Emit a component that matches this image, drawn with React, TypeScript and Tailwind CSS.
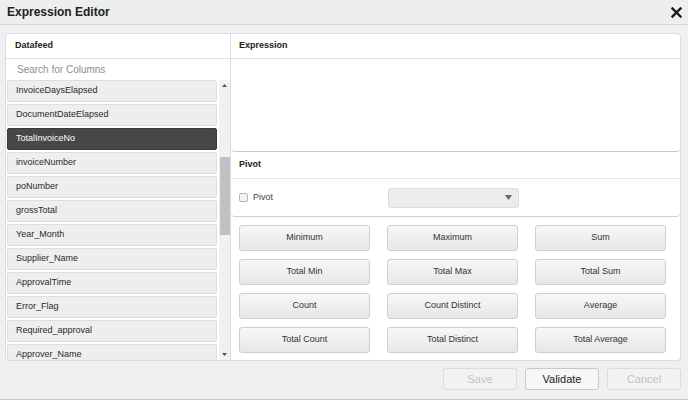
import React from 'react';

const columns = [
  'InvoiceDaysElapsed',
  'DocumentDateElapsed',
  'TotalInvoiceNo',
  'invoiceNumber',
  'poNumber',
  'grossTotal',
  'Year_Month',
  'Supplier_Name',
  'ApprovalTime',
  'Error_Flag',
  'Required_approval',
  'Approver_Name',
];

const aggregates = [
  'Minimum',
  'Maximum',
  'Sum',
  'Total Min',
  'Total Max',
  'Total Sum',
  'Count',
  'Count Distinct',
  'Average',
  'Total Count',
  'Total Distinct',
  'Total Average',
];

export default function App() {
  const selected = 'TotalInvoiceNo';

  return (
    <div
      className="w-[688px] h-[400px] bg-[#f0f0f0] flex flex-col overflow-hidden text-[#333]"
      style={{ fontFamily: '"Liberation Sans", Arial, sans-serif' }}
    >
      {/* header */}
      <div className="h-[25px] shrink-0 flex items-center justify-between pl-[7px] pr-[6px] bg-[#eeeeee] border-b border-[#d6d6d6]">
        <div className="text-[12px] font-bold text-[#222]">Expression Editor</div>
        <svg width="11" height="11" viewBox="0 0 11 11">
          <path d="M1.5 1.5 L9.5 9.5 M9.5 1.5 L1.5 9.5" stroke="#1a1a1a" strokeWidth="2.4" strokeLinecap="square" />
        </svg>
      </div>

      {/* body */}
      <div className="flex pl-[5px] pr-[7px] pt-[8px] h-[336px] shrink-0">
        {/* left column */}
        <div className="w-[226px] h-[328px] flex flex-col bg-white border border-[#dcdcdc] rounded-l-[4px] overflow-hidden">
          <div className="h-[25px] shrink-0 flex items-center px-[9px] text-[9px] font-bold text-[#222] border-b border-[#e2e2e2]">
            Datafeed
          </div>
          <div className="h-[21px] shrink-0 flex items-center px-[11px]">
            <span className="text-[10px] text-[#8e8e8e]">Search for Columns</span>
          </div>
          <div className="flex-1 flex min-h-0">
            <div className="flex-1 flex flex-col gap-[2px] pl-[1px] pr-[2px] overflow-hidden">
              {columns.map((c) => (
                <div
                  key={c}
                  className={
                    c === selected
                      ? 'h-[22px] shrink-0 flex items-center px-[8px] rounded-[2px] bg-[#474747] border border-[#3a3a3a] text-[9px] text-white'
                      : 'h-[22px] shrink-0 flex items-center px-[8px] rounded-[2px] bg-[#eeeeee] border border-[#dedede] text-[9px] text-[#2a2a2a]'
                  }
                >
                  {c}
                </div>
              ))}
            </div>
            {/* scrollbar */}
            <div className="w-[11px] shrink-0 bg-[#f1f1f1] flex flex-col items-center">
              <div className="h-[11px] flex items-center justify-center">
                <svg width="5" height="3" viewBox="0 0 5 3">
                  <path d="M0 3 L2.5 0 L5 3 Z" fill="#505050" />
                </svg>
              </div>
              <div className="h-[66px]" />
              <div className="w-[10px] h-[78px] bg-[#c1c1c1]" />
              <div className="flex-1" />
              <div className="h-[11px] flex items-center justify-center">
                <svg width="5" height="3" viewBox="0 0 5 3">
                  <path d="M0 0 L5 0 L2.5 3 Z" fill="#505050" />
                </svg>
              </div>
            </div>
          </div>
        </div>

        {/* right column */}
        <div className="flex-1 h-[328px] flex flex-col bg-white border border-l-0 border-[#dcdcdc] rounded-r-[4px]">
          <div className="flex flex-col border-b border-[#c8c8c8] rounded-b-[4px]">
            <div className="h-[25px] flex items-center px-[8px] text-[9px] font-bold text-[#222] border-b border-[#e2e2e2]">
              Expression
            </div>
            <div className="h-[92px]" />
          </div>
          <div className="flex flex-col border-b border-[#d0d0d0] rounded-b-[4px]">
            <div className="h-[27px] flex items-center px-[8px] text-[9px] font-bold text-[#222] border-b border-[#e8e8e8]">
              Pivot
            </div>
            <div className="h-[37px] flex items-center px-[8px]">
              <div className="w-[149px] flex items-center gap-[5px]">
                <div className="w-[9px] h-[9px] rounded-[2px] border border-[#b5b5b5] bg-[#f4f4f4]" />
                <span className="text-[9px] text-[#444]">Pivot</span>
              </div>
              <div className="w-[131px] h-[20px] rounded-[3px] border border-[#dcdcdc] bg-[#ececec] flex items-center justify-end pr-[6px]">
                <svg width="7" height="5" viewBox="0 0 7 5">
                  <path d="M0 0 L7 0 L3.5 5 Z" fill="#6a6a6a" />
                </svg>
              </div>
            </div>
          </div>
          <div className="grid grid-cols-[131px_131px_131px] gap-x-[17px] gap-y-[8px] pt-[8px] pl-[8px]">
            {aggregates.map((a) => (
              <div
                key={a}
                className="h-[26px] flex items-center justify-center rounded-[3px] border border-[#cfcfcf] bg-gradient-to-b from-[#f7f7f7] to-[#e7e7e7] text-[9px] text-[#333]"
              >
                {a}
              </div>
            ))}
          </div>
        </div>
      </div>

      {/* footer */}
      <div className="h-[63px] flex justify-end items-start gap-[8px] pr-[7px] pt-[7px] border-b border-[#c8c8c8]">
        <div className="w-[74px] h-[22px] flex items-center justify-center rounded-[3px] border border-[#dcdcdc] bg-[#f2f2f2] text-[11px] text-[#c4c4c4]">
          Save
        </div>
        <div className="w-[74px] h-[22px] flex items-center justify-center rounded-[3px] border border-[#c8c8c8] bg-[#f6f6f6] text-[11px] text-[#222]">
          Validate
        </div>
        <div className="w-[74px] h-[22px] flex items-center justify-center rounded-[3px] border border-[#dcdcdc] bg-[#f2f2f2] text-[11px] text-[#c4c4c4]">
          Cancel
        </div>
      </div>
    </div>
  );
}
